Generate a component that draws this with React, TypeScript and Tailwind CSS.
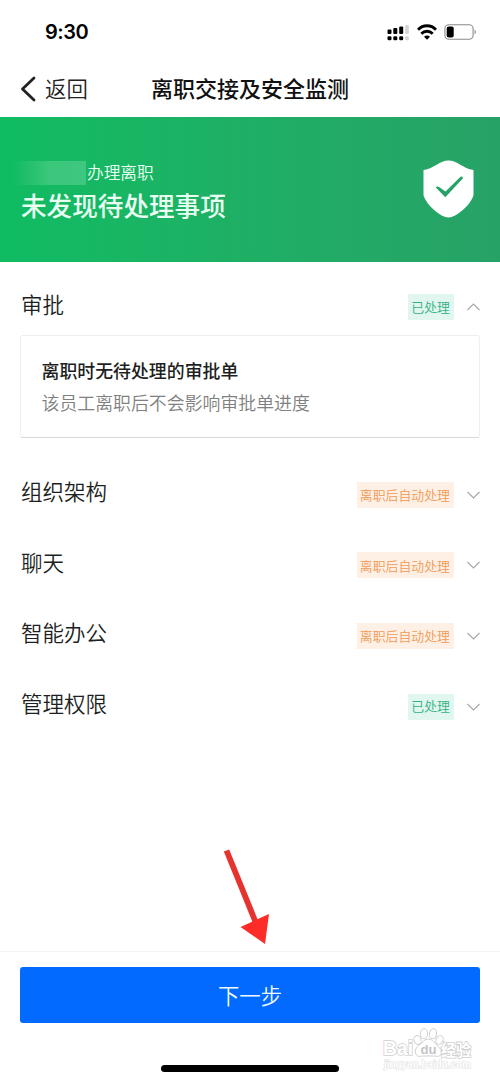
import React from 'react';

type Status = 'done' | 'auto';

interface Section {
  title: string;
  status: Status;
}

const sections: Section[] = [
  { title: '组织架构', status: 'auto' },
  { title: '聊天', status: 'auto' },
  { title: '智能办公', status: 'auto' },
  { title: '管理权限', status: 'done' },
];

const StatusBar: React.FC = () => (
  <div className="flex h-[62px] items-center justify-between pl-[45px] pr-[23px] pt-0.5">
    <span className="font-['Inter','Liberation_Sans',sans-serif] text-[20px] font-semibold tracking-[-0.5px] text-black">9:30</span>
    <div className="flex items-center">
      {/* Dual SIM signal */}
      <svg width="23" height="17" viewBox="0 0 23 17" className="mr-[7px]">
        <rect x="0.5" y="5.5" width="4" height="4.5" rx="1" />
        <rect x="6.3" y="4" width="4" height="6" rx="1" />
        <rect x="12.2" y="2.5" width="4" height="7.5" rx="1" />
        <rect x="18.2" y="1" width="3.6" height="9" rx="1" fill="#d4d4d4" />
        <rect x="0.5" y="12.3" width="4" height="4" rx="1.3" />
        <rect x="6.3" y="12.3" width="4" height="4" rx="1.3" />
        <rect x="12.2" y="12.3" width="4" height="4" rx="1.3" />
        <rect x="18.2" y="12.3" width="3.6" height="4" rx="1.3" fill="#d4d4d4" />
      </svg>
      <svg width="20" height="16" viewBox="0 0 20 16" fill="none" stroke="#000" strokeWidth="2.9" className="mr-[7px]">
        <path d="M1 5.7C6 0.5 14 0.5 19 5.7" />
        <path d="M4.3 9.7c3.3-3.3 8.1-3.3 11.4 0" />
        <path d="M7 12.7c1.8-1.6 4.2-1.6 6 0l-3 3z" fill="#000" stroke="none" />
      </svg>
      <svg width="33" height="16" viewBox="0 0 33 16">
        <rect x="0.9" y="0.8" width="28.2" height="14.4" rx="4" fill="none" stroke="#8b8b8b" strokeWidth="1.1" />
        <rect x="2.7" y="2.6" width="7" height="10.8" rx="2" />
        <path d="M30.6 5.5c1.6 0.7 1.6 4.3 0 5z" fill="#8b8b8b" />
      </svg>
    </div>
  </div>
);

const Badge: React.FC<{ status: Status }> = ({ status }) =>
  status === 'done' ? (
    <span className="flex h-[26px] items-center bg-[#e0f6ee] pl-[3.5px] pr-[4px] pb-px text-[12.9px] font-[350] text-[#31b184]">已处理</span>
  ) : (
    <span className="flex h-[26px] items-center bg-[#fff0e5] pl-[3px] pr-[4px] text-[12.9px] font-[350] text-[#f09a55]">离职后自动处理</span>
  );

const Row: React.FC<{ section: Section; open?: boolean }> = ({ section, open }) => (
  <div className="flex h-[70.6px] items-center justify-between pl-[21px] pr-[20px]">
    <span className="pb-[1.5px] text-[21.5px] font-[350] leading-8 text-[#1d1f22]">{section.title}</span>
    <div className="flex items-center gap-[13px] pt-[6px]">
      <Badge status={section.status} />
      <svg width="13" height="8" viewBox="0 0 13 8" fill="none" stroke="#a6a6a6" strokeWidth="1.1">
        <path d={open ? 'M0.5 7L6.5 1L12.5 7' : 'M0.5 1L6.5 7L12.5 1'} />
      </svg>
    </div>
  </div>
);

const Watermark: React.FC = () => (
  <svg width="100" height="50" viewBox="0 0 100 50" className="absolute right-[19px] top-[75px]" fill="#fff" stroke="#cfcfcf" strokeWidth="1">
    <ellipse cx="36.500" cy="13" rx="3.500" ry="4.500" transform="rotate(-20 36.5 13)" />
    <ellipse cx="43" cy="6.700" rx="3.600" ry="5" />
    <ellipse cx="52" cy="6.700" rx="3.600" ry="5" transform="rotate(10 52 6.7)" />
    <ellipse cx="58.500" cy="13" rx="3.500" ry="4.500" transform="rotate(25 58.5 13)" />
    <path d="M47.500 12c-4 0-5.500 3-8.500 5.500c-4 3-5.500 5.500-4.500 8.500c1 3.500 4 4 7 3h12c4 1 7 0 7-4c0-3.500-3-4.500-5.500-7.700C52 14 51 12 47.500 12z" />
    <g className="font-['Liberation_Sans','Noto_Sans_CJK_SC',sans-serif] font-bold [paint-order:stroke]" strokeWidth="1.600">
      <text x="2" y="28" fontSize="20" textLength="30" lengthAdjust="spacingAndGlyphs">Bai</text>
      <text x="39.500" y="27" fontSize="13" textLength="16" lengthAdjust="spacingAndGlyphs" fill="#c4c4c4" stroke="none">du</text>
      <text x="60" y="29" fontSize="16" textLength="30" lengthAdjust="spacingAndGlyphs">经验</text>
      <text x="3" y="41" fontSize="10" textLength="87" lengthAdjust="spacingAndGlyphs" strokeWidth="1" stroke="#dedede">jingyan.baidu.com</text>
    </g>
  </svg>
);

export default function App() {
  return (
    <div className="relative flex h-[1082px] w-[500px] flex-col overflow-hidden bg-white font-['Noto_Sans_CJK_SC',sans-serif]">
      <StatusBar />

      <header className="grid h-[55px] grid-cols-[1fr_auto_1fr] items-center px-[20px] pb-[2px]">
        <button className="flex items-center text-[21.4px] font-[350] text-[#222]">
          <svg width="17" height="26" viewBox="0 0 17 26" fill="none" stroke="#222" strokeWidth="2.8" strokeLinecap="round" strokeLinejoin="round" className="mr-2 mt-px">
            <path d="M14 2L2.500 13L14 24" />
          </svg>
          返回
        </button>
        <h1 className="pb-[2px] text-[22px] font-medium text-[#111]">离职交接及安全监测</h1>
      </header>

      <section className="flex h-[145px] items-center justify-between bg-linear-to-r from-[#0fbc62] to-[#27a267] pl-[21px] pr-[26px]">
        <div className="pt-[5px] text-[#e8fff2]">
          <div className="flex h-[25px] items-center text-[16.7px] font-[350]">
            {/* Redacted employee name */}
            <span className="-ml-[8px] mr-[1px] h-6 w-[73px] bg-linear-to-r from-transparent via-[#3bc77c] to-[#3fc77f]" />
            办理离职
          </div>
          <h2 className="text-[25.6px] font-medium leading-[38px]">未发现待处理事项</h2>
        </div>
        <svg width="51" height="58" viewBox="0 0 51 58" className="mb-[2px]">
          <path d="M0.500 10C11 8.500 17 0.500 25.500 0.500S40 8.500 50.500 10V35C48 45 33 57.500 25.500 57.500S3 45 0.500 35z" fill="#fff" />
          <path d="M12.800 27.500Q14.200 25.500 16.500 27.300L22.500 31.500L37.500 16.700Q39.800 15.800 40 18.200L22.300 37.200z" fill="#27a267" />
        </svg>
      </section>

      <main className="pt-[7px]">
        <Row section={{ title: '审批', status: 'done' }} open />
        <div className="mx-5 -mt-[5px] flex h-[103px] flex-col justify-center rounded-[3px] border border-[#eee] border-b-[#d8d8d8] pb-px pl-[20.5px]">
          <p className="text-[17.9px] font-medium leading-8 text-[#1d1f22]">离职时无待处理的审批单</p>
          <p className="text-[17.9px] font-[350] leading-8 text-[#808080]">该员工离职后不会影响审批单进度</p>
        </div>
        <div className="pt-[19px]">
          {sections.map((section) => (
            <Row key={section.title} section={section} />
          ))}
        </div>
      </main>

      {/* Pointer to the next step */}
      <svg width="50" height="98" viewBox="0 0 50 98" className="absolute left-[222px] top-[848px]">
        <path d="M4.500 2.500L34 75" stroke="#e53430" strokeWidth="5.800" />
        <path d="M18.500 79L47 66L43 96z" fill="#fe2c28" />
      </svg>

      <footer className="relative mt-auto flex h-[131px] flex-col border-t border-[#f4f4f4] px-5 pt-[15px]">
        <button className="h-[56px] rounded-[3px] bg-[#026aff] text-[21.4px] font-[350] text-[#effbff]">下一步</button>
        <Watermark />
        <div className="mx-auto mt-auto mb-[10px] h-[7px] w-[178px] rounded-full bg-black" />
      </footer>
    </div>
  );
}
